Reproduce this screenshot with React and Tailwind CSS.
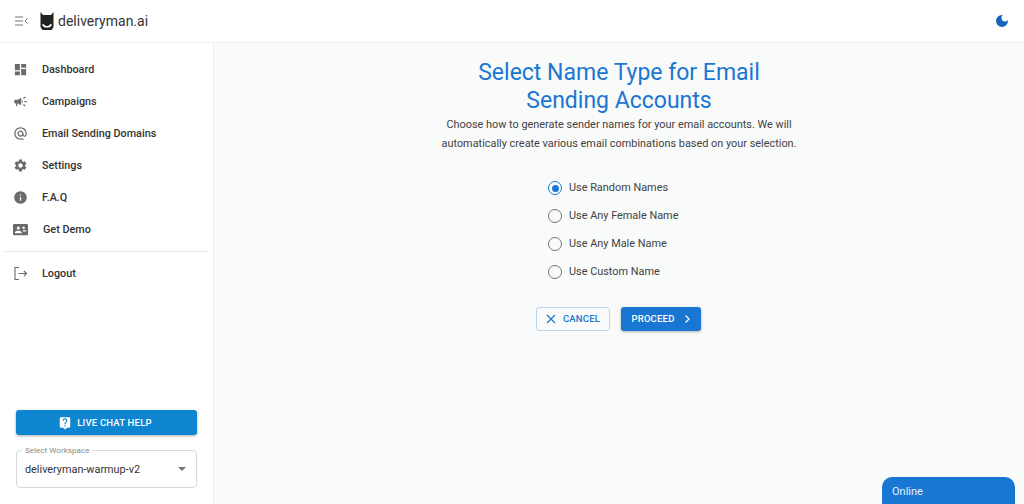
import React from "react";

const Mui = ({ d, size = 20, className = "" }) => (
  <svg width={size} height={size} viewBox="0 0 24 24" fill="currentColor" className={className}>
    <path d={d} />
  </svg>
);

const icons = {
  dash: "M3 13h8V3H3v10zm0 8h8v-6H3v6zm10 0h8V11h-8v10zm0-18v6h8V3h-8z",
  camp: "M18 11v2h4v-2h-4zm-2 6.61c.96.71 2.21 1.65 3.2 2.39.4-.53.8-1.07 1.2-1.6-.99-.74-2.24-1.68-3.2-2.4-.4.54-.8 1.08-1.2 1.61zM20.4 5.6c-.4-.53-.8-1.07-1.2-1.6-.99.74-2.24 1.68-3.2 2.4.4.53.8 1.07 1.2 1.6.96-.72 2.21-1.65 3.2-2.4zM4 9c-1.1 0-2 .9-2 2v2c0 1.1.9 2 2 2h1v4h2v-4h1l5 3V6L8 9H4zm11.5 3c0-1.33-.58-2.53-1.5-3.35v6.69c.92-.81 1.5-2.01 1.5-3.34z",
  at: "M12 2C6.48 2 2 6.48 2 12s4.48 10 10 10h5v-2h-5c-4.34 0-8-3.66-8-8s3.66-8 8-8 8 3.66 8 8v1.43c0 .79-.71 1.57-1.5 1.57s-1.5-.78-1.5-1.57V12c0-2.76-2.24-5-5-5s-5 2.24-5 5 2.24 5 5 5c1.38 0 2.64-.56 3.54-1.47.65.89 1.77 1.47 2.96 1.47 1.97 0 3.5-1.6 3.5-3.57V12c0-5.52-4.48-10-10-10zm0 13c-1.66 0-3-1.34-3-3s1.34-3 3-3 3 1.34 3 3-1.34 3-3 3z",
  gear: "M19.14 12.94c.04-.3.06-.61.06-.94 0-.32-.02-.64-.07-.94l2.03-1.58c.18-.14.23-.41.12-.61l-1.92-3.32c-.12-.22-.37-.29-.59-.22l-2.39.96c-.5-.38-1.03-.7-1.62-.94l-.36-2.54c-.04-.24-.24-.41-.48-.41h-3.84c-.24 0-.43.17-.47.41l-.36 2.54c-.59.24-1.13.57-1.62.94l-2.39-.96c-.22-.08-.47 0-.59.22L2.74 8.87c-.12.21-.08.47.12.61l2.03 1.58c-.05.3-.09.63-.09.94s.02.64.07.94l-2.03 1.58c-.18.14-.23.41-.12.61l1.92 3.32c.12.22.37.29.59.22l2.39-.96c.5.38 1.03.7 1.62.94l.36 2.54c.05.24.24.41.48.41h3.84c.24 0 .44-.17.47-.41l.36-2.54c.59-.24 1.13-.56 1.62-.94l2.39.96c.22.08.47 0 .59-.22l1.92-3.32c.12-.22.07-.47-.12-.61l-2.01-1.58zM12 15.6c-1.98 0-3.6-1.62-3.6-3.6s1.62-3.6 3.6-3.6 3.6 1.62 3.6 3.6-1.62 3.6-3.6 3.6z",
  info: "M12 2C6.48 2 2 6.48 2 12s4.48 10 10 10 10-4.48 10-10S17.52 2 12 2zm1 15h-2v-6h2v6zm0-8h-2V7h2v2z",
  demo: "M22 3H2C.9 3 0 3.9 0 5v14c0 1.1.9 2 2 2h20c1.1 0 2-.9 2-2V5c0-1.1-.9-2-2-2zM8.5 7a2.5 2.5 0 1 1 0 5 2.5 2.5 0 0 1 0-5zM3 18v-1.2c0-1.8 3.6-2.8 5.5-2.8s5.5 1 5.5 2.8V18H3zM17 7a2 2 0 1 1 0 4 2 2 0 0 1 0-4zm4 6v2h-5v-2h5z",
  help: "M19 2H5c-1.11 0-2 .9-2 2v14c0 1.1.89 2 2 2h4l3 3 3-3h4c1.1 0 2-.9 2-2V4c0-1.1-.9-2-2-2zm-6 16h-2v-2h2v2zm2.07-7.75l-.9.92C13.45 11.9 13 12.5 13 14h-2v-.5c0-1.1.45-2.1 1.17-2.83l1.24-1.26c.37-.36.59-.86.59-1.41 0-1.1-.9-2-2-2s-2 .9-2 2H8c0-2.21 1.79-4 4-4s4 1.79 4 4c0 .88-.36 1.68-.93 2.25z",
  moon: "M12 3a9 9 0 1 0 9 9c0-.46-.04-.92-.1-1.36a5.39 5.39 0 0 1-4.4 2.26 5.4 5.4 0 0 1-3.14-9.8c-.44-.06-.9-.1-1.36-.1z",
};

const NavItem = ({ icon, label, labelClass = "ml-[14px]", size = 17, stroke = false }) => (
  <div className="flex h-8 items-center pl-[13px]">
    <span className="flex w-[15px] justify-center text-[#6b6b6b]">
      {stroke ? (
        <svg width="15" height="15" viewBox="0 0 15 15" fill="none" stroke="currentColor" strokeWidth="1.1">
          <path d="M6 1.500H2v12h4M5.500 7.500h8M11 5l2.500 2.500L11 10" />
        </svg>
      ) : (
        <Mui d={icons[icon]} size={size} />
      )}
    </span>
    <span className={`${labelClass} translate-y-[1px] text-[10.8px] font-medium leading-4 text-[#333]`}>{label}</span>
  </div>
);

const Radio = ({ checked, label }) => (
  <div className="flex h-7 items-center">
    <span className={`flex h-[14px] w-[14px] items-center justify-center rounded-full border-[1.5px] ${checked ? "border-[#1976d2]" : "border-[#757575]"}`}>
      {checked && <span className="h-[7px] w-[7px] rounded-full bg-[#1976d2]" />}
    </span>
    <span className="ml-[7px] text-[10.9px] text-[#424242]">{label}</span>
  </div>
);

export default function App() {
  return (
    <div className="flex h-[504px] w-[1024px] flex-col overflow-hidden bg-white font-['Roboto',sans-serif]">
      <header className="flex h-[43px] shrink-0 items-center border-b border-[#efefef] bg-white pl-[15px] pr-[14px]">
        <svg width="13" height="10" viewBox="0 0 13 10" fill="none" stroke="#757575" strokeWidth="1">
          <path d="M0 1h8M0 5h8M0 9h8M12.500 2.500 10 5l2.500 2.500" />
        </svg>
        <svg width="14" height="18" viewBox="0 0 14 18" className="ml-[12px]" fill="#212121">
          <path d="M0.500 0 3 3h8l2.500-3v15l-2 3h-9l-2-3z" />
          <path d="M2.500 11.500 6 14h2l3.500-2.500v2.500L9 15.500H5l-2.500-1.500z" fill="#fff" />
        </svg>
        <span className="ml-[4px] text-[14px] text-[#333]">deliveryman.ai</span>
        <span className="ml-auto text-[#1565c0]">
          <Mui d={icons.moon} size={16} />
        </span>
      </header>
      <div className="flex min-h-0 flex-1">
        <aside className="flex w-[214px] shrink-0 flex-col border-r border-[#efefef] bg-white pt-[10px]">
          <NavItem icon="dash" label="Dashboard" />
          <NavItem icon="camp" label="Campaigns" />
          <NavItem icon="at" label="Email Sending Domains" />
          <NavItem icon="gear" label="Settings" />
          <NavItem icon="info" label="F.A.Q" />
          <NavItem icon="demo" label="Get Demo" labelClass="ml-[15px]" size={15} />
          <div className="mx-[5px] mt-[6px] mb-[5px] border-t border-[#e4e4e4]" />
          <NavItem label="Logout" stroke />
          <div className="mt-auto px-4 pb-4">
            <div className="flex h-[25px] w-[181px] items-center justify-center rounded-[3px] bg-[#0d85d1] pt-[1px] pr-[3px] text-white shadow-[0_1px_3px_rgba(0,0,0,0.35)]">
              <Mui d={icons.help} size={14} />
              <span className="ml-[5px] text-[9.5px] font-medium tracking-[0.2px]">LIVE CHAT HELP</span>
            </div>
            <div className="relative mt-[15px] flex h-[38px] w-[181px] items-center rounded-[4px] border border-[#d9d9d9] pl-2 pr-[10px]">
              <span className="absolute -top-[6px] left-[5px] bg-white px-[3px] text-[8.100px] leading-[10px] text-[#8a8a8a]">Select Workspace</span>
              <span className="pt-[2px] text-[10.85px] text-[#333]">deliveryman-warmup-v2</span>
              <span className="ml-auto h-0 w-0 border-x-[4px] border-t-[4px] border-x-transparent border-t-[#757575]" />
            </div>
          </div>
        </aside>
        <main className="relative flex flex-1 flex-col items-center bg-[#f9fafa] pt-[16px]">
          <h1 className="w-[300px] text-center text-[23px] leading-[28px] text-[#1976d2]">Select Name Type for Email Sending Accounts</h1>
          <p className="w-[400px] text-center text-[10.9px] leading-[19px] text-[#424242]">Choose how to generate sender names for your email accounts. We will automatically create various email combinations based on your selection.</p>
          <div className="mt-[21px] flex w-[150px] flex-col self-center pl-[4px]">
            <Radio checked label="Use Random Names" />
            <Radio label="Use Any Female Name" />
            <Radio label="Use Any Male Name" />
            <Radio label="Use Custom Name" />
          </div>
          <div className="mt-[21px] mr-[1px] flex gap-[11px]">
            <div className="flex h-[24px] w-[74px] items-center justify-center rounded-[3px] border border-[#b9d7f3] text-[#1976d2]">
              <svg width="10" height="10" viewBox="0 0 10 10" fill="none" stroke="currentColor" strokeWidth="1.2"><path d="M1 1l8 8M9 1l-8 8" /></svg>
              <span className="ml-[7px] text-[9.5px] font-medium tracking-[0.2px]">CANCEL</span>
            </div>
            <div className="flex h-[24px] w-[80px] items-center justify-center rounded-[3px] bg-[#1976d2] text-white shadow-[0_1px_3px_rgba(0,0,0,0.3)]">
              <span className="text-[9.5px] font-medium tracking-[0.2px]">PROCEED</span>
              <svg width="8" height="10" viewBox="0 0 8 10" fill="none" stroke="currentColor" strokeWidth="1.2" className="ml-[8px]"><path d="M2.500 1.500 6 5 2.500 8.500" /></svg>
            </div>
          </div>
          <div className="absolute bottom-0 right-[9px] flex h-[27px] w-[133px] items-center rounded-t-[10px] bg-[#1976d2] pl-[10px] pt-[3px] text-[11px] text-[#e3f2fd]">Online</div>
        </main>
      </div>
    </div>
  );
}
